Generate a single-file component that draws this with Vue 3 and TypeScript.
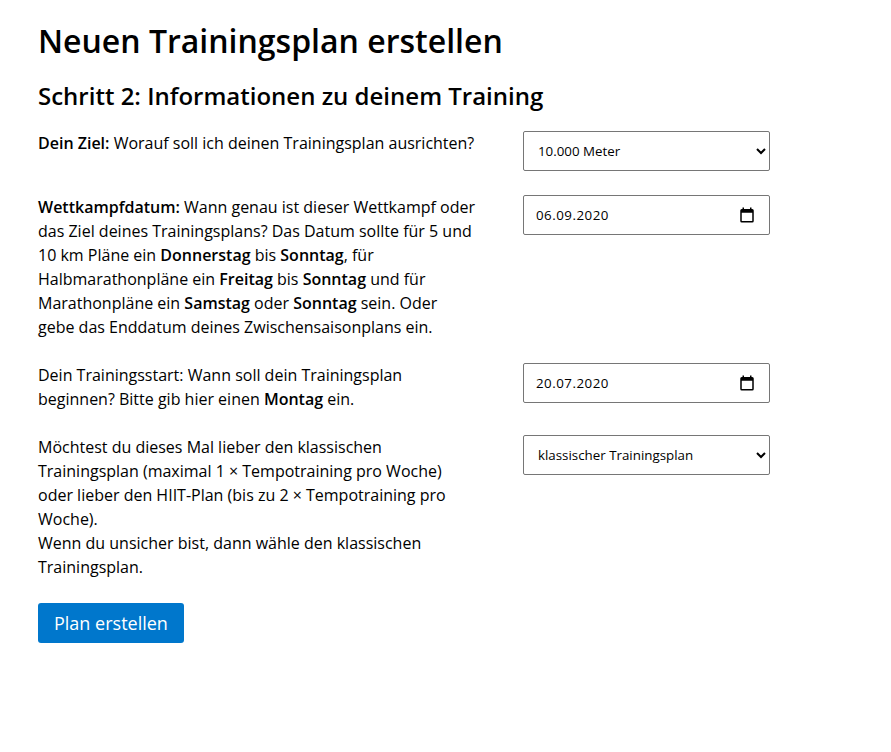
<script setup lang="ts">
import { ref } from 'vue';

const goal = ref('10000');
const raceDate = ref('06.09.2020');
const startDate = ref('20.07.2020');
const planType = ref('classic');
</script>

<template>
  <main class="page">
    <h1>Neuen Trainingsplan erstellen</h1>
    <h2>Schritt 2: Informationen zu deinem Training</h2>
    <form class="plan-form" @submit.prevent>
      <div class="row">
        <p class="question"><b>Dein Ziel:</b> Worauf soll ich deinen Trainingsplan ausrichten?</p>
        <select v-model="goal" class="control">
          <option value="5000">5.000 Meter</option>
          <option value="10000">10.000 Meter</option>
        </select>
      </div>
      <div class="row">
        <p class="question">
          <b>Wettkampfdatum:</b> Wann genau ist dieser Wettkampf oder das Ziel deines Trainingsplans?
          Das Datum sollte für 5 und 10 km Pläne ein <b>Donnerstag</b> bis <b>Sonntag</b>, für
          Halbmarathonpläne ein <b>Freitag</b> bis <b>Sonntag</b> und für Marathonpläne ein
          <b>Samstag</b> oder <b>Sonntag</b> sein. Oder gebe das Enddatum deines Zwischensaisonplans ein.
        </p>
        <div class="date-field">
          <input v-model="raceDate" type="text" class="control date-input">
          <svg class="date-icon" viewBox="0 0 24 24" aria-hidden="true">
            <path d="M19 4h-1V2h-2v2H8V2H6v2H5a2 2 0 0 0-2 2v14a2 2 0 0 0 2 2h14a2 2 0 0 0 2-2V6a2 2 0 0 0-2-2zm0 16H5V9h14v11z" />
          </svg>
        </div>
      </div>
      <div class="row">
        <p class="question">
          Dein Trainingsstart: Wann soll dein Trainingsplan beginnen? Bitte gib hier einen
          <b>Montag</b> ein.
        </p>
        <div class="date-field">
          <input v-model="startDate" type="text" class="control date-input">
          <svg class="date-icon" viewBox="0 0 24 24" aria-hidden="true">
            <path d="M19 4h-1V2h-2v2H8V2H6v2H5a2 2 0 0 0-2 2v14a2 2 0 0 0 2 2h14a2 2 0 0 0 2-2V6a2 2 0 0 0-2-2zm0 16H5V9h14v11z" />
          </svg>
        </div>
      </div>
      <div class="row">
        <p class="question">
          Möchtest du dieses Mal lieber den klassischen Trainingsplan (maximal 1 × Tempotraining pro
          Woche) oder lieber den HIIT-Plan (bis zu 2 × Tempotraining pro Woche).<br>
          Wenn du unsicher bist, dann wähle den klassischen Trainingsplan.
        </p>
        <select v-model="planType" class="control">
          <option value="classic">klassischer Trainingsplan</option>
          <option value="hiit">HIIT-Plan</option>
        </select>
      </div>
      <button type="submit" class="btn-submit">Plan erstellen</button>
    </form>
  </main>
</template>

<style scoped>
.page {
  box-sizing: border-box;
  width: 891px;
  min-height: 752px;
  padding: 20px 38px;
  font-family: "Open Sans", sans-serif;
  font-size: 16px;
  line-height: 24px;
  color: #000;
}

h1 {
  margin: 0 0 18px;
  font-size: 32px;
  line-height: 42px;
  font-weight: 600;
}

h2 {
  margin: 0 0 19px;
  font-size: 24px;
  line-height: 32px;
  font-weight: 600;
}

.row {
  display: grid;
  grid-template-columns: 438px 247px;
  column-gap: 47px;
  align-items: start;
  margin-bottom: 24px;
}

.question {
  margin: 0;
}

.question b {
  font-weight: 600;
}

.control {
  box-sizing: border-box;
  width: 247px;
  height: 40px;
  padding: 0 10px;
  border: 1px solid #767676;
  border-radius: 2px;
  background: #fff;
  font-family: "Open Sans", sans-serif;
  font-size: 13.33px;
  color: #000;
}

.date-field {
  position: relative;
  width: 247px;
  height: 40px;
}

.date-input {
  display: block;
  padding: 0 40px 0 12px;
  letter-spacing: 0.5px;
}

.date-icon {
  position: absolute;
  top: 11px;
  right: 14px;
  width: 18px;
  height: 18px;
  fill: #000;
  pointer-events: none;
}

.btn-submit {
  display: block;
  padding: 0 16px;
  height: 40px;
  border: none;
  border-radius: 3px;
  background: #0077cc;
  color: #fff;
  font-family: "Open Sans", sans-serif;
  font-size: 18px;
  cursor: pointer;
}
</style>
